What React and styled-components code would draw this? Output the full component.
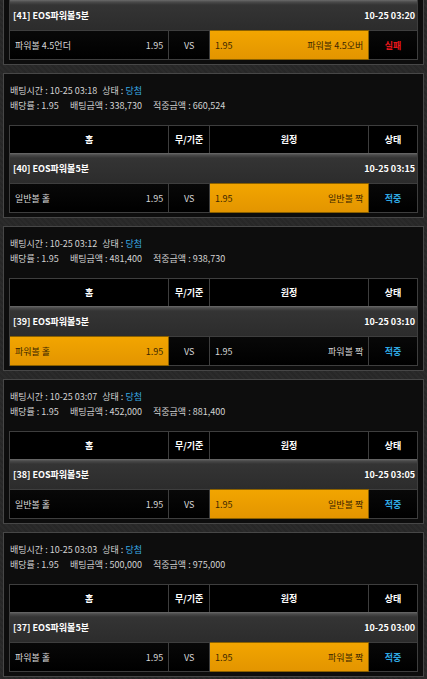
import React from "react";
import styled, { createGlobalStyle } from "styled-components";

const GlobalStyle = createGlobalStyle`
  html, body {
    margin: 0;
    padding: 0;
    background: #272727;
  }
  body {
    font-family: "Noto Sans CJK KR", "Noto Sans", sans-serif;
    font-size: 9px;
    color: #d6d6d6;
  }
`;

const Page = styled.div`
  width: 427px;
  min-height: 679px;
  padding: 0 3px;
  box-sizing: border-box;
  display: flex;
  flex-direction: column;
  gap: 8px;
  background:
    repeating-linear-gradient(45deg, rgba(255,255,255,0.015) 0 2px, rgba(0,0,0,0.02) 2px 4px),
    #282828;
`;

const Card = styled.div`
  border: 1px solid #474747;
  border-top: ${(p) => (p.$cut ? "none" : "1px solid #474747")};
  background: #0d0d0d;
  padding: ${(p) => (p.$cut ? "0 5px 4px" : "9px 5px 4px")};
`;

const Info = styled.div`
  line-height: 15px;
  color: #d2d2d2;
  padding-left: 1px;
  margin-bottom: 12px;
`;

const Gap = styled.span`
  display: inline-block;
  width: ${(p) => p.$w || 11}px;
`;

const Win = styled.span`
  color: #38a9e2;
`;

const Table = styled.div`
  display: grid;
  grid-template-columns: 160fr 41fr 160fr 49fr;
  border-left: 1px solid #3e3e3e;
`;

const HeadCell = styled.div`
  height: 27px;
  display: flex;
  align-items: center;
  justify-content: center;
  background: #000;
  color: #fff;
  font-weight: bold;
  border-right: 1px solid #3e3e3e;
  border-top: 1px solid #3e3e3e;
`;

const GameRow = styled.div`
  grid-column: 1 / -1;
  height: 30px;
  display: flex;
  align-items: center;
  justify-content: space-between;
  padding: 0 2px 0 3px;
  background: linear-gradient(#6b6b6b 0, #4a4a4a 2px, #343434 5px, #2c2c2c 100%);
  border-right: 1px solid #3e3e3e;
  color: #fff;
  font-weight: bold;
`;

const Cell = styled.div`
  height: 28px;
  display: flex;
  align-items: center;
  justify-content: ${(p) => p.$align || "space-between"};
  padding: 0 5px;
  border-top: 1px solid #3e3e3e;
  border-bottom: 1px solid #3e3e3e;
  border-right: 1px solid #3e3e3e;
  background: ${(p) =>
    p.$picked
      ? "linear-gradient(#f2a500, #e39500)"
      : "linear-gradient(#080808, #000)"};
  color: ${(p) => (p.$picked ? "#3a2600" : "#d8d8d8")};
  ${(p) => p.$picked && "border-color: #8a6000;"}
`;

const Status = styled(Cell)`
  justify-content: center;
  font-weight: bold;
  color: ${(p) => (p.$fail ? "#e5161b" : "#2fa9e3")};
`;

const Match = ({ no, time, home, away, pick, result }) => (
  <>
    <GameRow>
      <span>[{no}] EOS파워볼5분</span>
      <span>{time}</span>
    </GameRow>
    <Cell $picked={pick === "home"}>
      <span>{home}</span>
      <span>1.95</span>
    </Cell>
    <Cell $align="center">VS</Cell>
    <Cell $picked={pick === "away"}>
      <span>1.95</span>
      <span>{away}</span>
    </Cell>
    <Status $fail={result === "실패"}>{result}</Status>
  </>
);

const bets = [
  {
    betTime: "10-25 03:18",
    amount: "338,730",
    payout: "660,524",
    no: 40,
    time: "10-25 03:15",
    home: "일반볼 홀",
    away: "일반볼 짝",
    pick: "away",
  },
  {
    betTime: "10-25 03:12",
    amount: "481,400",
    payout: "938,730",
    no: 39,
    time: "10-25 03:10",
    home: "파워볼 홀",
    away: "파워볼 짝",
    pick: "home",
  },
  {
    betTime: "10-25 03:07",
    amount: "452,000",
    payout: "881,400",
    no: 38,
    time: "10-25 03:05",
    home: "일반볼 홀",
    away: "일반볼 짝",
    pick: "away",
  },
  {
    betTime: "10-25 03:03",
    amount: "500,000",
    payout: "975,000",
    no: 37,
    time: "10-25 03:00",
    home: "파워볼 홀",
    away: "파워볼 짝",
    pick: "away",
  },
];

const App = () => (
  <Page>
    <GlobalStyle />
    <Card $cut>
      <Table>
        <Match
          no={41}
          time="10-25 03:20"
          home="파워볼 4.5언더"
          away="파워볼 4.5오버"
          pick="away"
          result="실패"
        />
      </Table>
    </Card>
    {bets.map((b) => (
      <Card key={b.no}>
        <Info>
          <div>
            배팅시간 : {b.betTime}
            <Gap $w={5} />
            상태 : <Win>당첨</Win>
          </div>
          <div>
            배당률 : 1.95
            <Gap />
            배팅금액 : {b.amount}
            <Gap />
            적중금액 : {b.payout}
          </div>
        </Info>
        <Table>
          <HeadCell>홈</HeadCell>
          <HeadCell>무/기준</HeadCell>
          <HeadCell>원정</HeadCell>
          <HeadCell>상태</HeadCell>
          <Match {...b} result="적중" />
        </Table>
      </Card>
    ))}
  </Page>
);

export default App;
